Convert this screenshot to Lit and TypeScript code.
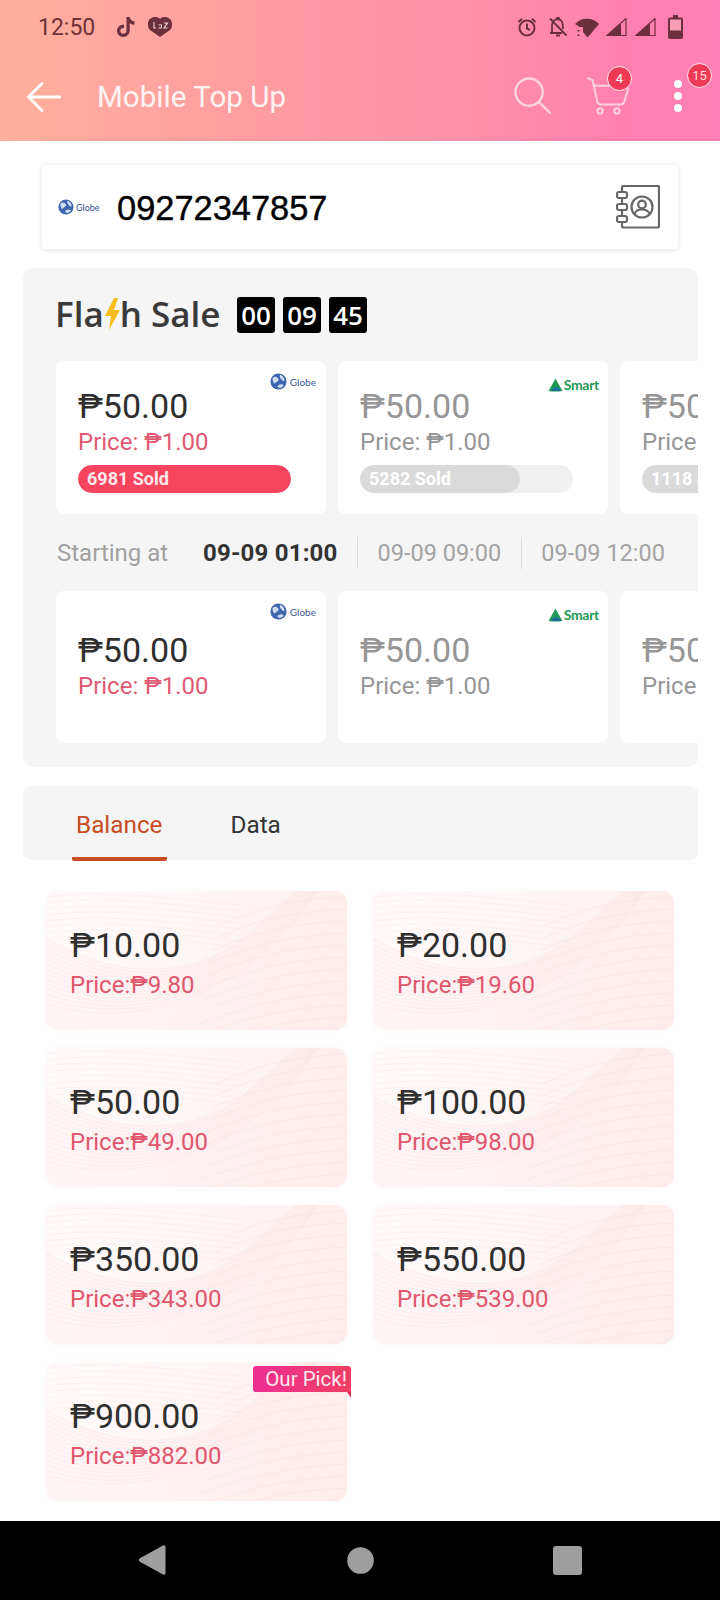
import { css, html, LitElement, svg } from 'lit';
import { customElement } from 'lit/decorators.js';

type Deal = { brand: 'globe' | 'smart'; sold?: string; fill?: number; active: boolean };
type Denom = { face: string; price: string; pick?: boolean };

const SALE_NOW: Deal[] = [
  { brand: 'globe', sold: '6981 Sold', fill: 100, active: true },
  { brand: 'smart', sold: '5282 Sold', fill: 75, active: false },
  { brand: 'smart', sold: '1118 Sold', fill: 60, active: false },
];

const SALE_NEXT: Deal[] = [
  { brand: 'globe', active: true },
  { brand: 'smart', active: false },
  { brand: 'smart', active: false },
];

const DENOMS: Denom[] = [
  { face: '10.00', price: '9.80' },
  { face: '20.00', price: '19.60' },
  { face: '50.00', price: '49.00' },
  { face: '100.00', price: '98.00' },
  { face: '350.00', price: '343.00' },
  { face: '550.00', price: '539.00' },
  { face: '900.00', price: '882.00', pick: true },
];

// guilloche lines behind the denomination cards
const sweep = Array.from({ length: 14 }, (_, i) => {
  const o = i * 5;
  return `M0 ${48 + o} C70 ${88 + o * 0.7} 150 ${92 + o * 0.4} 208 ${38 + o * 0.5} S 262 ${-8 + o * 0.2} 275 ${-14 + o * 0.2}`;
});
const flat = Array.from({ length: 12 }, (_, i) => {
  const y = 6 + i * 12;
  return `M${170 + i * -2} ${y + 30} C220 ${y + 6} 260 ${y + 2} 301 ${y}`;
});
const topLines = Array.from({ length: 8 }, (_, i) => {
  const y = 6 + i * 6;
  return `M0 ${y} C60 ${y - 8} 130 ${y + 2} 195 ${y + 8}`;
});

const waves = svg`
  <path d="M0 46 C70 88 150 92 208 38 S262 -8 275 -14 L301 -14 L301 139 L0 139 Z" fill="#fde3e3" fill-opacity=".18"></path>
  ${sweep.map((d) => svg`<path d=${d} fill="none" stroke="#f7d3d6" stroke-width=".6" opacity=".4"></path>`)}
  ${flat.map((d) => svg`<path d=${d} fill="none" stroke="#f6d0d0" stroke-width=".6" opacity=".45"></path>`)}
  ${topLines.map((d) => svg`<path d=${d} fill="none" stroke="#f9dcdc" stroke-width=".6" opacity=".5"></path>`)}
`;

@customElement('app-root')
export class AppRoot extends LitElement {
  static override styles = css`
    :host {
      display: block;
      width: 720px;
      height: 1600px;
      background: #fff;
      font-family: Roboto, 'Liberation Sans', sans-serif;
      overflow: hidden;
    }

    .page {
      display: flex;
      flex-direction: column;
      height: 1600px;
    }

    svg {
      display: block;
      flex-shrink: 0;
    }

    /* header */
    .header {
      height: 141px;
      flex-shrink: 0;
      background: linear-gradient(90deg, #ffb09c 0%, #ff9ba2 38%, #ff93a8 60%, #ff7fb0 88%, #ff80b4 100%);
      box-sizing: border-box;
    }

    .status {
      display: flex;
      align-items: center;
      height: 54px;
      padding: 0 37px 0 38px;
      color: #6f3236;
      font-size: 23px;
    }

    .status-left {
      display: flex;
      align-items: center;
      flex: 1;
    }

    .time {
      width: 79px;
    }

    .laz {
      margin-left: 13px;
    }

    .status-right {
      display: flex;
      align-items: center;
      gap: 11px;
    }

    .toolbar {
      display: flex;
      align-items: center;
      height: 83px;
      padding-left: 27px;
    }

    .back {
      margin-top: 2px;
    }

    .title {
      margin: 3px 0 0 36px;
      color: #fff;
      opacity: 0.88;
      font-size: 29.6px;
      flex: 1;
    }

    .tool {
      position: relative;
    }

    .search {
      margin-right: 36px;
    }

    .cart {
      margin-right: 44px;
      margin-top: 1px;
    }

    .dots {
      display: flex;
      flex-direction: column;
      gap: 4px;
      margin-right: 38px;
    }

    .dots i {
      width: 8px;
      height: 8px;
      border-radius: 50%;
      background: #fff;
    }

    .badge {
      position: absolute;
      box-sizing: border-box;
      width: 25px;
      height: 25px;
      border-radius: 50%;
      border: 1.5px solid #ffe9ee;
      background: #ee3a57;
      color: #fff;
      font-size: 13px;
      display: flex;
      align-items: center;
      justify-content: center;
    }

    .cart .badge {
      top: -11px;
      right: -2px;
    }

    .dots-wrap .badge {
      top: -17px;
      left: 13px;
      color: #ffd9de;
    }

    /* phone number */
    .phone {
      display: flex;
      align-items: center;
      height: 84px;
      flex-shrink: 0;
      margin: 24px 42px 0 42px;
      padding: 0 18px 0 16px;
      border-radius: 4px;
      background: #fff;
      box-shadow: 0 1px 6px rgba(0, 0, 0, 0.13);
    }

    .number {
      flex: 1;
      margin: 2px 0 0 17px;
      font-family: 'Liberation Sans', Arial, sans-serif;
      font-size: 34.4px;
      color: #000;
      -webkit-text-stroke: 0.4px #000;
    }

    /* logos */
    .logo {
      display: flex;
      align-items: center;
      gap: 3px;
      font-family: Lato, 'Noto Sans', sans-serif;
    }

    .logo.globe {
      color: #3d5a96;
      font-size: 10px;
    }

    .logo.smart {
      color: #1f9a58;
      font-size: 14px;
      font-weight: 700;
      gap: 1px;
      letter-spacing: -0.3px;
    }

    .logo.big {
      width: 42px;
      gap: 2px;
      font-size: 9px;
      color: #33508c;
    }

    /* flash sale */
    .flash {
      flex-shrink: 0;
      width: 675px;
      box-sizing: border-box;
      margin: 19px 0 0 23px;
      padding: 29px 0 24px;
      border-radius: 10px;
      background: #f5f5f5;
      overflow: hidden;
    }

    .flash-head {
      display: flex;
      align-items: center;
      height: 36px;
      padding-left: 32px;
    }

    .flash-title {
      display: flex;
      align-items: center;
      width: 182px;
      padding-bottom: 3px;
      font-family: 'Open Sans', sans-serif;
      font-weight: 600;
      font-size: 35px;
      color: #3a3a3a;
    }

    .clock {
      display: flex;
      gap: 8px;
    }

    .clock span {
      width: 38px;
      height: 36px;
      border-radius: 3px;
      background: #000;
      color: #fff;
      font-family: 'Open Sans', sans-serif;
      font-weight: 600;
      font-size: 26px;
      display: flex;
      align-items: center;
      justify-content: center;
    }

    .deals {
      display: flex;
      gap: 12px;
      padding-left: 33px;
    }

    .deals.first {
      margin-top: 28px;
    }

    .deal {
      position: relative;
      flex-shrink: 0;
      width: 270px;
      height: 153px;
      box-sizing: border-box;
      padding: 25px 0 0 22px;
      border-radius: 8px;
      background: #fff;
      color: #969696;
    }

    .deals.next .deal {
      padding-top: 39px;
      height: 152px;
    }

    .deal .logo {
      position: absolute;
      top: 12px;
      right: 10px;
    }

    .deal .logo.smart {
      top: 15px;
      right: 9px;
    }

    .deal .face {
      font-size: 34px;
      line-height: 40px;
    }

    .deal .cost {
      margin-top: 1px;
      font-size: 24px;
      line-height: 30px;
      white-space: nowrap;
    }

    .deal.on .face {
      color: #2f2f2f;
    }

    .deal.on .cost {
      color: #df5a72;
    }

    .bar {
      width: 213px;
      height: 28px;
      margin-top: 8px;
      border-radius: 14px;
      background: #f0f0f0;
      overflow: hidden;
    }

    .fill {
      height: 28px;
      box-sizing: border-box;
      padding-left: 9px;
      border-radius: 14px;
      background: #dadada;
      color: #fff;
      font-size: 18px;
      font-weight: 700;
      line-height: 28px;
      white-space: nowrap;
    }

    .deal.on .fill {
      background: #f7455f;
      color: #ffe9ec;
    }

    .slots {
      display: flex;
      align-items: center;
      height: 77px;
      padding-left: 34px;
      font-size: 24px;
      color: #a0a0a0;
    }

    .slots .label {
      width: 146px;
    }

    .slots .now {
      font-weight: 700;
      color: #333;
      letter-spacing: 0.2px;
    }

    .slot {
      color: #a3a3a3;
      font-size: 23.5px;
    }

    .slots .sep {
      width: 1px;
      height: 32px;
      margin: 0 19.5px;
      background: #dcdcdc;
    }

    /* tabs */
    .tabs {
      display: flex;
      flex-shrink: 0;
      width: 675px;
      height: 74px;
      margin: 19px 0 0 23px;
      padding-left: 49px;
      box-sizing: border-box;
      border-radius: 8px;
      background: #f5f5f5;
      font-size: 24.3px;
      color: #333;
    }

    .tab {
      display: flex;
      align-items: center;
      height: 75px;
      padding: 5px 4px 0;
      box-sizing: border-box;
      border-bottom: 4px solid transparent;
    }

    .tab.on {
      color: #c84c24;
      border-bottom-color: #c84c24;
      border-radius: 0 0 2px 2px;
      margin-right: 60px;
    }

    /* denominations */
    .grid {
      display: grid;
      grid-template-columns: 301px 301px;
      grid-auto-rows: 139px;
      gap: 18px 26px;
      margin: 31px 0 0 46px;
    }

    .denom {
      position: relative;
      box-sizing: border-box;
      padding: 34px 0 0 24px;
      border-radius: 12px;
      background: linear-gradient(100deg, #fffafa 0%, #fff6f6 45%, #fdeeee 100%);
      box-shadow: 0 0 6px rgba(240, 200, 200, 0.12);
    }

    .denom .waves {
      position: absolute;
      inset: 0;
      border-radius: 12px;
    }

    .denom .face,
    .denom .cost {
      position: relative;
    }

    .denom .face {
      font-size: 34px;
      line-height: 40px;
      color: #2f2f2f;
    }

    .denom .cost {
      margin-top: 2px;
      font-size: 24px;
      line-height: 36px;
      color: #e0566c;
    }

    .pick {
      position: absolute;
      top: 4px;
      right: -4px;
      width: 98px;
      height: 26px;
      box-sizing: border-box;
      padding-right: 4px;
      border-radius: 3px 3px 0 3px;
      background: linear-gradient(90deg, #ee2f92, #f03f63);
      color: #ffe7ef;
      font-size: 20.5px;
      line-height: 26px;
      text-align: right;
      white-space: nowrap;
    }

    .pick::after {
      content: '';
      position: absolute;
      right: 0;
      top: 26px;
      border-top: 6px solid #d8324f;
      border-left: 4px solid transparent;
    }

    /* android nav */
    .nav {
      display: flex;
      align-items: center;
      height: 79px;
      margin-top: auto;
      flex-shrink: 0;
      background: #000;
      padding-left: 138px;
      padding-bottom: 1px;
      box-sizing: border-box;
    }

    .nav .home {
      margin-left: 181px;
    }

    .nav .recent {
      margin-left: 179px;
    }
  `;

  private globe(size: number) {
    return html`<svg width=${size} height=${size} viewBox="0 0 20 20">
      <circle cx="10" cy="10" r="9.5" fill="#3f65ae"></circle>
      <path d="M3 6c3-3 6-1 7 1s-2 3-4 5-3-4-3-6zM12 2c3 1 5 4 5 7-2 1-3-1-4-2s-2-3-1-5zM10 14c2-1 5-1 6 0-1 3-4 4-6 3s-1-2 0-3z" fill="#cfdcf2"></path>
    </svg>`;
  }

  private logo(brand: Deal['brand']) {
    if (brand === 'globe') {
      return html`<div class="logo globe">${this.globe(17)}<span>Globe</span></div>`;
    }
    return html`<div class="logo smart">
      <svg width="15" height="14" viewBox="0 0 15 14">
        <path d="M7.500 0.500 14.500 13 Q7.500 14 0.500 13Z" fill="#1f9a58"></path>
        <path d="M4 12c1-3 5-4 8-1l1 2H3z" fill="#1b6f9c"></path>
      </svg><span>Smart</span>
    </div>`;
  }

  private deal(d: Deal) {
    return html`<div class="deal ${d.active ? 'on' : ''}">
      ${this.logo(d.brand)}
      <div class="face">₱50.00</div>
      <div class="cost">Price: ₱1.00</div>
      ${d.sold
        ? html`<div class="bar"><div class="fill" style="width:${d.fill}%">${d.sold}</div></div>`
        : ''}
    </div>`;
  }

  private statusIcons() {
    const c = '#6b2f3e';
    const signal = html`<svg width="21" height="18" viewBox="0 0 21 18">
      <path d="M20 0.500V17.500H1Z" fill="none" stroke=${c} stroke-width="1.200"></path>
      <path d="M15 5.500V17.500H1Z" fill=${c}></path>
    </svg>`;
    return html`
      <svg width="20" height="20" viewBox="0 0 20 20" fill="none" stroke=${c} stroke-width="2">
        <circle cx="10" cy="11" r="7.500"></circle>
        <path d="M10 6.500V11.500L13 13M1.500 5 5 1.800M18.500 5 15 1.800"></path>
      </svg>
      <svg width="20" height="20" viewBox="0 0 20 20" fill="none" stroke=${c} stroke-width="1.800">
        <path d="M4 15V9c0-3 1-5 3-6M7 3c2-1.500 5-1 6.500 1S15 8 15 12M2 16H14M8 18.500h4M2 1.500 18.500 18.500"></path>
        <circle cx="10" cy="1.500" r="1" fill=${c}></circle>
      </svg>
      <svg width="24" height="19" viewBox="0 0 24 19" style="margin-left:-4px">
        <path d="M0 6C6-1 18-1 24 6L13 19H12L8 14V9H4.500Z" fill=${c}></path>
        <path d="M2 12h3l-1.500 2zM2 18h3l-1.500-2z" fill=${c}></path>
      </svg>
      <div style="width:21px;margin-left:-4px">${signal}</div>
      <div style="width:21px;margin-left:-3px">${signal}</div>
      <svg width="15" height="24" viewBox="0 0 15 24" style="margin-left:1px">
        <path d="M5 0h5v2.500h3a2 2 0 0 1 2 2V22a2 2 0 0 1-2 2H2a2 2 0 0 1-2-2V4.500a2 2 0 0 1 2-2h3z" fill=${c}></path>
        <rect x="2" y="4.500" width="11" height="11" fill="#fb9db6"></rect>
      </svg>
    `;
  }

  override render() {
    return html`
      <div class="page">
        <header class="header">
          <div class="status">
            <div class="status-left">
              <span class="time">12:50</span>
              <svg width="18" height="20" viewBox="0 0 18 20">
                <path d="M9.500 0h3.200c.3 2.500 2 4.200 4.800 4.600v3.200c-1.900 0-3.500-.6-4.800-1.500v7.300c0 3.700-2.800 6.400-6.300 6.400S0 17.200 0 13.800c0-3.600 3-6.400 7-6.100v3.300c-2-.4-3.700.9-3.700 2.800 0 1.700 1.300 3 3 3 1.800 0 3.200-1.300 3.200-3.300z" fill="#6b2f3e"></path>
              </svg>
              <svg class="laz" width="24" height="20" viewBox="0 0 24 20">
                <path d="M12 20 2 13C0 11 0 9 0 7 0 2 4 0 7 0c2 0 4 .5 5 2 1-1.500 3-2 5-2 3 0 7 2 7 7 0 2 0 4-2 6z" fill="#6b2f3e"></path>
                <path d="M6 5v6h2M10.500 11h3M10.500 8h3v3M16 6h3.500l-3.500 5h3.500" fill="none" stroke="#f2d4d4" stroke-width="1.100"></path>
              </svg>
            </div>
            <div class="status-right">${this.statusIcons()}</div>
          </div>
          <div class="toolbar">
            <svg class="back" width="34" height="30" viewBox="0 0 34 30" fill="none" stroke="#fff" stroke-width="2.800" stroke-linecap="round" stroke-linejoin="round">
              <path d="M33 15H2M15 1.500 1.500 15 15 28.500"></path>
            </svg>
            <div class="title">Mobile Top Up</div>
            <svg class="search" width="37" height="37" viewBox="0 0 38 38" fill="none" stroke="#ffd6e2" stroke-width="2.400" stroke-linecap="round">
              <circle cx="15.500" cy="15.500" r="14"></circle>
              <path d="M25.500 25.500 37 37"></path>
            </svg>
            <div class="tool cart">
              <svg width="43" height="38" viewBox="0 0 46 40" fill="none" stroke="#ffcfdf" stroke-width="2.200" stroke-linecap="round" stroke-linejoin="round">
                <path d="M1 1 6 3 11 26Q12 29 15 29H36Q39 29 40 26L44 12M7 9H30"></path>
                <circle cx="14" cy="36" r="2.800"></circle>
                <circle cx="32" cy="36" r="2.800"></circle>
              </svg>
              <div class="badge">4</div>
            </div>
            <div class="tool dots-wrap">
              <div class="dots"><i></i><i></i><i></i></div>
              <div class="badge">15</div>
            </div>
          </div>
        </header>

        <section class="phone">
          <div class="logo big">${this.globe(16)}<span>Globe</span></div>
          <div class="number">09272347857</div>
          <svg width="44" height="44" viewBox="0 0 44 44" fill="none" stroke="#666" stroke-width="2.200" stroke-linejoin="round">
            <path d="M6 7V2.500Q6 1 7.500 1H41.500Q43 1 43 2.500V41Q43 42.500 41.500 42.500H7.500Q6 42.500 6 41V36"></path>
            <rect x="1" y="7" width="10" height="6" rx="2"></rect>
            <rect x="1" y="19" width="10" height="6" rx="2"></rect>
            <rect x="1" y="31" width="10" height="6" rx="2"></rect>
            <path d="M6 13V19M6 25V31"></path>
            <circle cx="26" cy="22" r="10.500"></circle>
            <circle cx="26" cy="19.500" r="3.800"></circle>
            <path d="M18.500 29c2-6 13-6 15 0"></path>
          </svg>
        </section>

        <section class="flash">
          <div class="flash-head">
            <div class="flash-title">
              <span>Fla</span>
              <svg width="18" height="32" viewBox="0 0 18 32" style="margin:0 -1px">
                <path d="M11 0 2 18H8L6 32 17 12H11L15 0Z" fill="#f7bd1c"></path>
              </svg>
              <span>h Sale</span>
            </div>
            <div class="clock"><span>00</span><span>09</span><span>45</span></div>
          </div>
          <div class="deals first">${SALE_NOW.map((d) => this.deal(d))}</div>
          <div class="slots">
            <span class="label">Starting at</span>
            <span class="now">09-09 01:00</span>
            <span class="sep"></span>
            <span class="slot">09-09 09:00</span>
            <span class="sep"></span>
            <span class="slot">09-09 12:00</span>
          </div>
          <div class="deals next">${SALE_NEXT.map((d) => this.deal(d))}</div>
        </section>

        <nav class="tabs">
          <div class="tab on">Balance</div>
          <div class="tab">Data</div>
        </nav>

        <section class="grid">
          ${DENOMS.map(
            (d) => html`<div class="denom">
              <svg class="waves" width="301" height="139" viewBox="0 0 301 139">${waves}</svg>
              <div class="face">₱${d.face}</div>
              <div class="cost">Price:₱${d.price}</div>
              ${d.pick ? html`<div class="pick">Our Pick!</div>` : ''}
            </div>`
          )}
        </section>

        <footer class="nav">
          <svg width="28" height="32" viewBox="0 0 28 32">
            <path d="M25 1.500Q27.500 0.500 27.500 3V29Q27.500 31.500 25 30.500L1.500 17.500Q0 16 1.500 14.500Z" fill="#9e9e9e"></path>
          </svg>
          <svg class="home" width="27" height="27" viewBox="0 0 27 27"><circle cx="13.500" cy="13.500" r="13.300" fill="#9e9e9e"></circle></svg>
          <svg class="recent" width="29" height="29" viewBox="0 0 29 29"><rect width="29" height="29" rx="3" fill="#9e9e9e"></rect></svg>
        </footer>
      </div>
    `;
  }
}
